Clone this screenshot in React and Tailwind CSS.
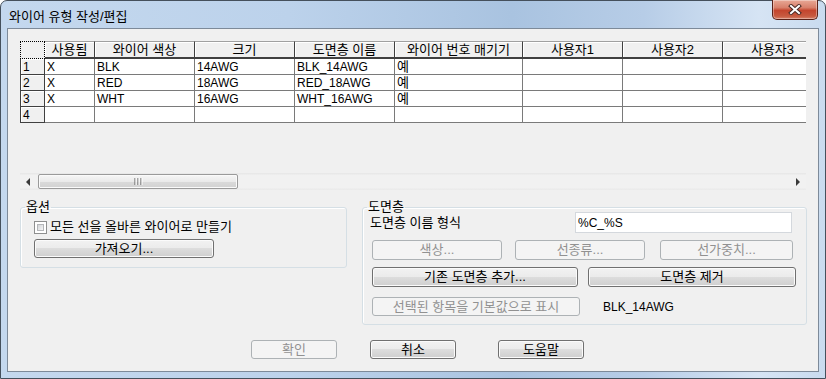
const FONT = "[font-family:'Liberation_Sans','Noto_Sans_CJK_KR',sans-serif]";

const BTN =
  "flex items-center justify-center shrink-0 rounded-[3px] border border-[#707070] bg-[linear-gradient(#f2f2f2_0%,#ebebeb_49%,#dddddd_50%,#cfcfcf_100%)] shadow-[inset_0_0_0_1px_#fbfbfb] text-black";
const BTN_DIS =
  "flex items-center justify-center shrink-0 rounded-[3px] border border-[#adb2b5] bg-[#f4f4f4] text-[#919191]";

const cols = [
  { w: "w-[50px]", t: "사용됨" },
  { w: "w-[100px]", t: "와이어 색상" },
  { w: "w-[100px]", t: "크기" },
  { w: "w-[100px]", t: "도면층 이름" },
  { w: "w-[128px]", t: "와이어 번호 매기기" },
  { w: "w-[100px]", t: "사용자1" },
  { w: "w-[100px]", t: "사용자2" },
  { w: "w-[100px]", t: "사용자3" },
];

const rows = [
  ["1", ["X", "BLK", "14AWG", "BLK_14AWG", "예", "", "", ""]],
  ["2", ["X", "RED", "18AWG", "RED_18AWG", "예", "", "", ""]],
  ["3", ["X", "WHT", "16AWG", "WHT_16AWG", "예", "", "", ""]],
  ["4", ["", "", "", "", "", "", "", ""]],
];

const isAscii = (s) => /^[\x00-\x7F]*$/.test(s);

function CloseBtn() {
  return (
    <div className="-mt-[1px] mr-[7px] w-[46px] h-[20px] rounded-b-[5px] border border-t-0 border-[#5a2219] bg-[linear-gradient(#e8a896_0%,#d8806b_40%,#c4452e_55%,#c75a40_85%,#d9836b_100%)] shadow-[inset_0_0_0_1px_rgba(255,255,255,0.35)] flex items-center justify-center">
      <svg width="14" height="11" viewBox="0 0 14 11">
        <path d="M3 2 L11 9 M11 2 L3 9" stroke="#4a2a25" strokeWidth="4" strokeLinecap="square" />
        <path d="M3 2 L11 9 M11 2 L3 9" stroke="#ffffff" strokeWidth="2" strokeLinecap="square" />
      </svg>
    </div>
  );
}

function Grid() {
  return (
    <div className="ml-[12px] mt-[12px] w-[786px] h-[132px] overflow-hidden shrink-0">
      <div className="w-[900px]">
        <div className="flex h-[18px]">
          <div className="w-[25px] h-[18px] shrink-0 border border-dotted border-black bg-[#f0f0f0]" />
          {cols.map((c, i) => (
            <div
              key={i}
              className={`${c.w} h-[18px] shrink-0 flex items-center justify-center bg-[#f0f0f0] border-t border-t-[#a0a0a0] border-r border-r-[#404040] border-b-2 border-b-[#404040] shadow-[inset_1px_1px_0_#ffffff] whitespace-nowrap`}
            >
              {c.t}
            </div>
          ))}
        </div>
        {rows.map(([n, cells], r) => (
          <div key={r} className="flex h-[16px]">
            <div className="w-[25px] h-[16px] shrink-0 pl-[2px] flex items-center text-[12px] bg-[#f0f0f0] border-l border-r border-b border-[#404040] shadow-[inset_1px_1px_0_#ffffff]">
              {n}
            </div>
            {cells.map((v, i) => (
              <div
                key={i}
                className={`${cols[i].w} ${isAscii(v) ? "text-[12px]" : "text-[13px]"} h-[16px] shrink-0 pl-[2px] flex items-center bg-white border-r border-b border-[#7a7a7a] whitespace-nowrap`}
              >
                {v}
              </div>
            ))}
          </div>
        ))}
      </div>
    </div>
  );
}

function ScrollBar() {
  return (
    <div className="ml-[12px] w-[786px] h-[17px] shrink-0 flex items-stretch bg-[linear-gradient(#e6e6e6,#f1f1f1_15%,#f1f1f1_85%,#e9e9e9)]">
      <div className="w-[17px] flex items-center justify-center">
        <svg width="5" height="8" viewBox="0 0 5 8">
          <path d="M4 0 L0 4 L4 8 Z" fill="#3a3a3a" />
        </svg>
      </div>
      <div className="ml-[1px] my-[1px] w-[200px] rounded-[2px] border border-[#9a9a9a] bg-[linear-gradient(#f6f6f6_0%,#eaeaea_50%,#dadada_51%,#d2d2d2_100%)] shadow-[inset_0_0_0_1px_#fafafa] flex items-center justify-center">
        <svg width="9" height="7" viewBox="0 0 9 7">
          <path d="M1 0 V7 M4 0 V7 M7 0 V7" stroke="#5a5a5a" strokeWidth="1" />
          <path d="M2 0 V7 M5 0 V7 M8 0 V7" stroke="#ffffff" strokeWidth="1" />
        </svg>
      </div>
      <div className="flex-1" />
      <div className="w-[17px] flex items-center justify-center">
        <svg width="5" height="8" viewBox="0 0 5 8">
          <path d="M1 0 L5 4 L1 8 Z" fill="#3a3a3a" />
        </svg>
      </div>
    </div>
  );
}

function CheckBox() {
  return (
    <div className="w-[13px] h-[13px] shrink-0 border border-[#8e8f8f] bg-white p-[2px]">
      <div className="w-full h-full border border-[#b4b6b9] bg-[linear-gradient(135deg,#d3d5d8,#f5f5f5)]" />
    </div>
  );
}

export default function App() {
  return (
    <div className={`w-[826px] h-[379px] overflow-hidden ${FONT} text-[13px] leading-[16px] text-black`}>
      <div className="w-[826px] h-[379px] rounded-t-[7px] border border-[#45505c] bg-[linear-gradient(90deg,#c4d8ee_0%,#bcd2eb_35%,#a9c3e0_62%,#b7cde7_78%,#d6e4f4_92%,#c9dbef_100%)] flex flex-col">
        <div className="h-[27px] shrink-0 flex items-start justify-between">
          <div className="pl-[8px] pt-[8px]">와이어 유형 작성/편집</div>
          <CloseBtn />
        </div>
        <div className="mx-[6px] h-[344px] shrink-0 border border-[#7d8a99] bg-[#f0f0f0] flex flex-col">
          <Grid />
          <ScrollBar />

          <div className="ml-[12px] mt-[9px] flex items-start gap-[15px] shrink-0">
            <fieldset className="w-[327px] h-[69px] border border-[#d5dfe5] rounded-[3px] shadow-[inset_1px_1px_0_#ffffff]">
              <legend className="ml-[4px] px-[1px] leading-[16px]">옵션</legend>
              <div className="pl-[13px]">
                <div className="pt-[4px] flex items-center h-[20px]">
                  <CheckBox />
                  <span className="ml-[3px]">모든 선을 올바른 와이어로 만들기</span>
                </div>
                <div className={`${BTN} mt-[4px] w-[180px] h-[19px]`}>가져오기...</div>
              </div>
            </fieldset>

            <fieldset className="w-[445px] h-[126px] border border-[#d5dfe5] rounded-[3px] shadow-[inset_1px_1px_0_#ffffff]">
              <legend className="ml-[4px] px-[1px] leading-[16px]">도면층</legend>
              <div className="pl-[9px]">
                <div className="-mt-[3px] h-[21px] flex items-center">
                  <span className="-ml-[2px] w-[205px]">도면층 이름 형식</span>
                  <div className="w-[217px] h-[21px] bg-white border border-[#d4d8dd] pl-[2px] flex items-center text-[12px]">%C_%S</div>
                </div>
                <div className="mt-[7px] flex">
                  <div className={`${BTN_DIS} w-[130px] h-[20px]`}>색상...</div>
                  <div className={`${BTN_DIS} ml-[13px] w-[130px] h-[20px]`}>선종류...</div>
                  <div className={`${BTN_DIS} ml-[15px] w-[133px] h-[20px]`}>선가중치...</div>
                </div>
                <div className="mt-[7px] flex">
                  <div className={`${BTN} w-[206px] h-[20px]`}>기존 도면층 추가...</div>
                  <div className={`${BTN} ml-[10px] w-[208px] h-[20px]`}>도면층 제거</div>
                </div>
                <div className="mt-[10px] flex items-center">
                  <div className={`${BTN_DIS} w-[208px] h-[19px]`}>선택된 항목을 기본값으로 표시</div>
                  <span className="ml-[23px] text-[12px]">BLK_14AWG</span>
                </div>
              </div>
            </fieldset>
          </div>

          <div className="mt-[15px] flex shrink-0">
            <div className={`${BTN_DIS} ml-[243px] w-[86px] h-[19px]`}>확인</div>
            <div className={`${BTN} ml-[33px] w-[86px] h-[19px]`}>취소</div>
            <div className={`${BTN} ml-[42px] w-[86px] h-[19px]`}>도움말</div>
          </div>
        </div>
      </div>
    </div>
  );
}
